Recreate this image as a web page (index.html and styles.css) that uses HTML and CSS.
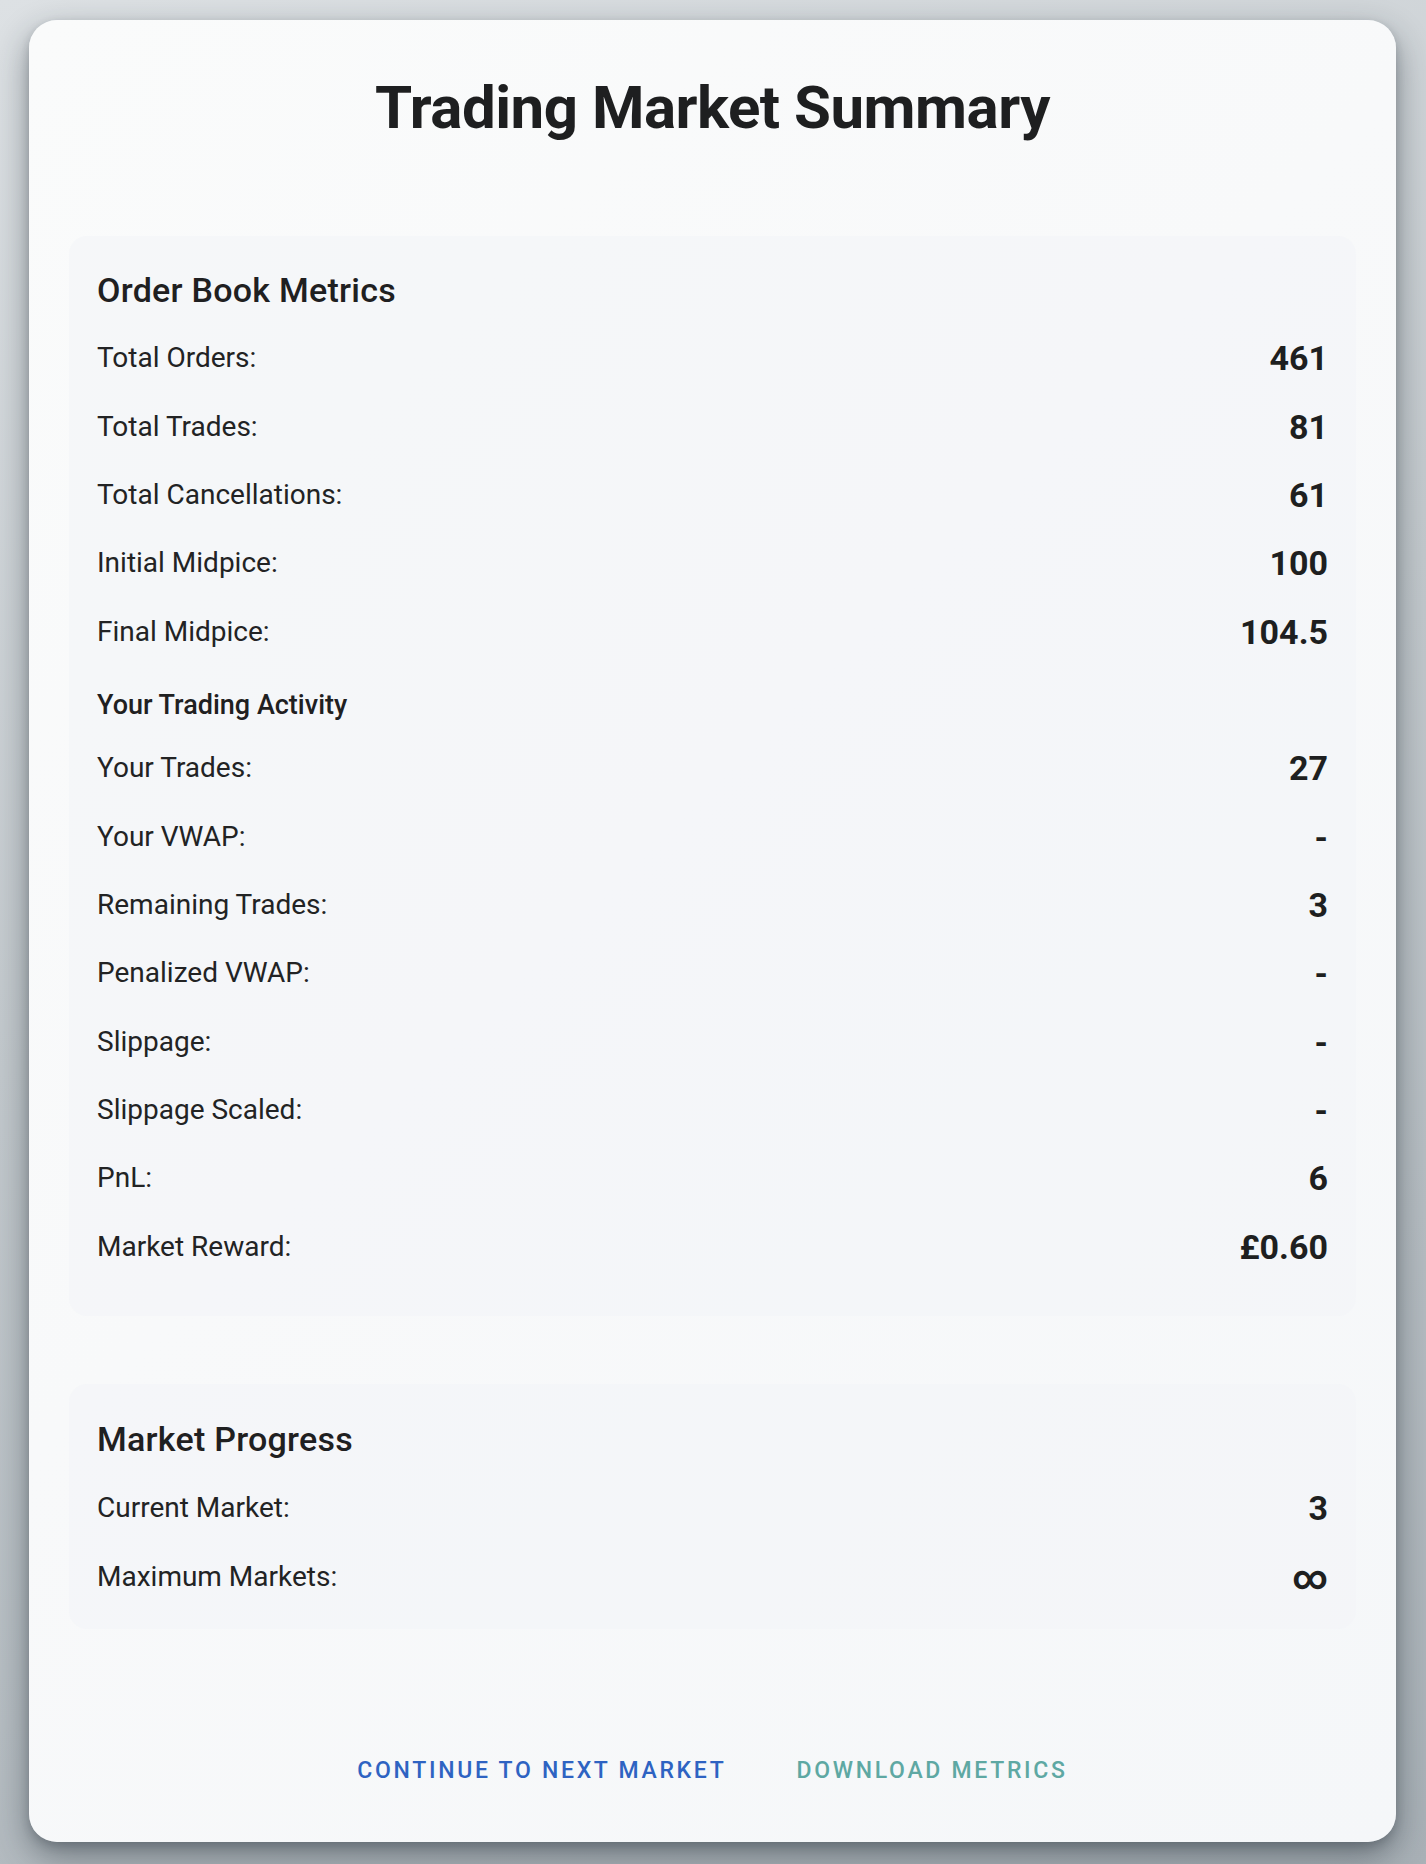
FILE: index.html
```html
<!DOCTYPE html>
<html lang="en">
<head>
<meta charset="utf-8">
<title>Trading Market Summary</title>
<link rel="stylesheet" href="styles.css">
</head>
<body>
<main class="card">
  <h1 class="title">Trading Market Summary</h1>

  <section class="panel">
    <h2 class="panel-title">Order Book Metrics</h2>
    <div class="list list-first">
      <div class="row"><span class="label">Total Orders:</span><span class="value">461</span></div>
      <div class="row"><span class="label">Total Trades:</span><span class="value">81</span></div>
      <div class="row"><span class="label">Total Cancellations:</span><span class="value">61</span></div>
      <div class="row"><span class="label">Initial Midpice:</span><span class="value">100</span></div>
      <div class="row"><span class="label">Final Midpice:</span><span class="value">104.5</span></div>
      <div class="subhead">Your Trading Activity</div>
      <div class="row"><span class="label">Your Trades:</span><span class="value">27</span></div>
      <div class="row"><span class="label">Your VWAP:</span><span class="value">-</span></div>
      <div class="row"><span class="label">Remaining Trades:</span><span class="value">3</span></div>
      <div class="row"><span class="label">Penalized VWAP:</span><span class="value">-</span></div>
      <div class="row"><span class="label">Slippage:</span><span class="value">-</span></div>
      <div class="row"><span class="label">Slippage Scaled:</span><span class="value">-</span></div>
      <div class="row"><span class="label">PnL:</span><span class="value">6</span></div>
      <div class="row"><span class="label">Market Reward:</span><span class="value">£0.60</span></div>
    </div>
  </section>

  <section class="panel panel-second">
    <h2 class="panel-title">Market Progress</h2>
    <div class="list list-second">
      <div class="row"><span class="label">Current Market:</span><span class="value">3</span></div>
      <div class="row"><span class="label">Maximum Markets:</span><span class="value">∞</span></div>
    </div>
  </section>

  <div class="actions">
    <button class="btn btn-primary" type="button">Continue to Next Market</button>
    <button class="btn btn-secondary" type="button">Download Metrics</button>
  </div>
</main>
</body>
</html>
```

FILE: styles.css
```css
* { box-sizing: border-box; }

html {
  background: #c4cace;
}

body {
  margin: 0;
  padding: 20px 30px 21px 29px;
  min-height: 1864px;
  font-family: Roboto, "Liberation Sans", Arial, sans-serif;
  color: #202122;
  background: linear-gradient(160deg, #dde1e4 0%, #c3c9cd 45%, #a9b1b7 100%);
}

.card {
  border-radius: 28px;
  padding: 40px 40px 40px;
  background: linear-gradient(135deg, #fafbfb 0%, #f8f9fa 45%, #f5f7f9 100%);
  box-shadow: 0 14px 34px rgba(25, 35, 45, 0.45), 0 4px 10px rgba(25, 35, 45, 0.18);
}

.title {
  margin: 12px 0 92px;
  font-size: 60px;
  line-height: 72px;
  font-weight: 700;
  letter-spacing: -0.5px;
  text-align: center;
  color: #1e1f20;
}

.panel {
  border-radius: 18px;
  padding: 33px 28px 18px;
  background: rgba(242, 244, 248, 0.55);
}

.panel-second {
  margin-top: 68px;
  padding-top: 34px;
  padding-bottom: 18px;
}

.panel-title {
  margin: 0 0 13px;
  font-size: 34px;
  line-height: 42px;
  font-weight: 500;
  letter-spacing: 0.25px;
  color: #1f2021;
}

.panel-second .panel-title {
  margin-bottom: 14px;
}

.list-first {
  margin-bottom: 17px;
}

.row {
  display: flex;
  justify-content: space-between;
  align-items: center;
  height: 68.4px;
}

.list-second .row {
  height: 68.6px;
}

.label {
  font-size: 28px;
  line-height: 42px;
  font-weight: 400;
  color: #222324;
}

.value {
  font-size: 34px;
  line-height: 44px;
  font-weight: 700;
  color: #1e1f20;
}

.subhead {
  padding: 19px 0 9px;
  font-size: 27px;
  line-height: 40px;
  font-weight: 500;
  color: #1f2021;
}

.actions {
  display: flex;
  justify-content: center;
  gap: 54px;
  margin: 116px 0 5px;
}

.btn {
  border: 0;
  background: transparent;
  padding: 6px 8px;
  font-family: inherit;
  font-size: 23px;
  line-height: 40px;
  font-weight: 500;
  letter-spacing: 2.7px;
  text-transform: uppercase;
  cursor: pointer;
}

.btn-primary { color: #2e63c2; }
.btn-secondary { color: #5ea8a3; }
```
